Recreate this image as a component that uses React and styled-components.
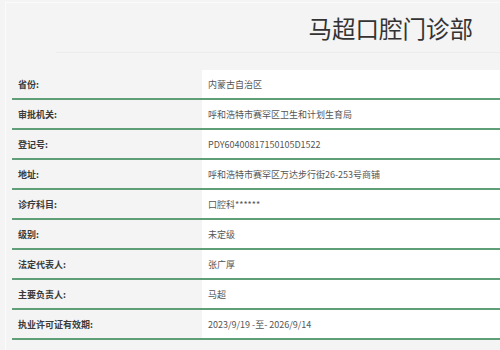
import React from 'react'
import styled, { createGlobalStyle } from 'styled-components'

const GlobalStyle = createGlobalStyle`
  *, *::before, *::after {
    box-sizing: border-box;
  }
  html, body {
    margin: 0;
    padding: 0;
    background: #f4f4f4;
  }
  body {
    font-family: "Noto Sans CJK SC", "Noto Sans", sans-serif;
  }
`

const Page = styled.div`
  width: 495px;
  height: 348px;
  overflow: hidden;
  margin: 2px 0 0 5px;
  border-top: 1px solid #fbfbfb;
  border-left: 1px solid #fbfbfb;
`

const Header = styled.header`
  height: 50px;
  display: flex;
  align-items: center;
  justify-content: flex-end;
  padding-right: 27px;
  margin-left: 50px;
  border-bottom: 1px solid #ececec;
`

const Title = styled.h1`
  margin: 0;
  font-size: 23.5px;
  font-weight: normal;
  color: #333;
`

const Table = styled.div`
  margin: 17px 0 0 6px;
`

const Row = styled.div`
  display: flex;
  height: 30px;
  border-bottom: 2px solid #5e9f77;
`

const Label = styled.div`
  width: 190px;
  flex-shrink: 0;
  padding-left: 6px;
  display: flex;
  align-items: center;
  font-size: 9px;
  font-weight: bold;
  color: #3a3a3a;
`

const Value = styled.div`
  flex: 1;
  background: #fff;
  padding-left: 6px;
  display: flex;
  align-items: center;
  font-size: 9px;
  color: #555;
`

const rows = [
  ['省份:', '内蒙古自治区'],
  ['审批机关:', '呼和浩特市赛罕区卫生和计划生育局'],
  ['登记号:', 'PDY60400817150105D1522'],
  ['地址:', '呼和浩特市赛罕区万达步行街26-253号商铺'],
  ['诊疗科目:', '口腔科******'],
  ['级别:', '未定级'],
  ['法定代表人:', '张广厚'],
  ['主要负责人:', '马超'],
  ['执业许可证有效期:', '2023/9/19 -至- 2026/9/14'],
]

const App = () => (
  <Page>
    <GlobalStyle />
    <Header>
      <Title>马超口腔门诊部</Title>
    </Header>
    <Table>
      {rows.map(([label, value]) => (
        <Row key={label}>
          <Label>{label}</Label>
          <Value>{value}</Value>
        </Row>
      ))}
    </Table>
  </Page>
)

export default App
